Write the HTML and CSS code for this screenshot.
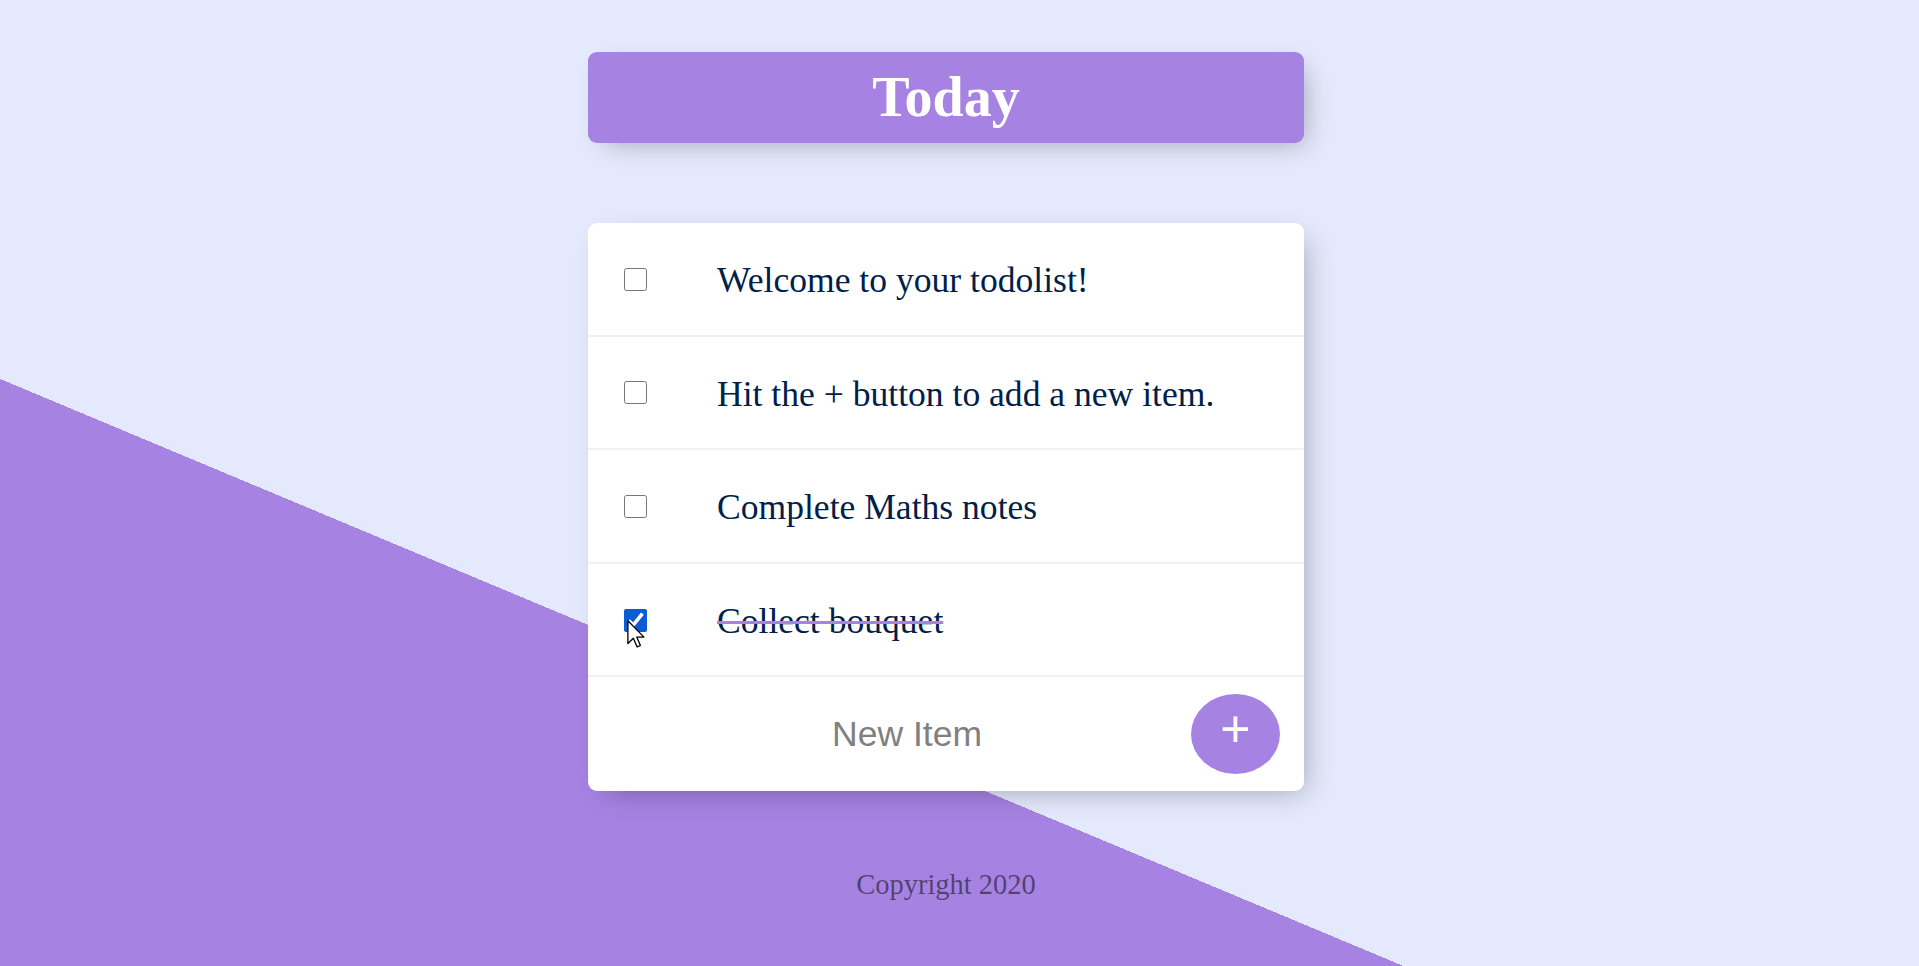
FILE: index.html
```html
<!DOCTYPE html>
<html lang="en">
<head>
<meta charset="utf-8">
<title>To-Do List</title>
<link rel="stylesheet" href="styles.css">
</head>
<body>
<div class="page">
  <div class="box heading">
    <h1>Today</h1>
  </div>

  <div class="box list">
    <div class="item">
      <span class="check"><input type="checkbox"></span>
      <p>Welcome to your todolist!</p>
    </div>
    <div class="item">
      <span class="check"><input type="checkbox"></span>
      <p>Hit the + button to add a new item.</p>
    </div>
    <div class="item">
      <span class="check"><input type="checkbox"></span>
      <p>Complete Maths notes</p>
    </div>
    <div class="item done">
      <span class="check">
        <input type="checkbox" checked>
        <svg class="cursor" width="18" height="28" viewBox="0 0 12 19" aria-hidden="true">
          <path d="M0.5 0.5 L0.5 16 L4.2 12.4 L6.8 18.3 L9 17.3 L6.5 11.6 L11.4 11.6 Z" fill="#fff" stroke="#000" stroke-width="0.9" stroke-linejoin="round"/>
        </svg>
      </span>
      <p>Collect bouquet</p>
    </div>
    <form class="item new">
      <input type="text" name="newItem" placeholder="New Item" autocomplete="off">
      <button type="button" name="list">+</button>
    </form>
  </div>

  <footer class="footer">Copyright 2020</footer>
</div>
</body>
</html>
```

FILE: styles.css
```css
html {
  height: 100%;
  background-color: #E4E9FD;
  background-image: linear-gradient(22.7deg, #A683E3 541.6px, #E4E9FD 541.6px);
  background-attachment: fixed;
}

body {
  margin: 0;
  padding: 0 27px 0 0;
  font-family: "Liberation Serif", "Times New Roman", serif;
  overflow: hidden;
}

.page {
  width: 716px;
  margin: 0 auto;
  padding-top: 52px;
}

.box {
  background: #fff;
  border-radius: 9px;
  box-shadow: 9px 9px 27px -9px rgba(0, 0, 0, 0.3);
}

.heading {
  background-color: #A683E3;
  text-align: center;
  padding: 18px;
}

.heading h1 {
  margin: 0;
  font-size: 56px;
  line-height: 55px;
  font-weight: bold;
  color: #fff;
}

.list {
  margin-top: 80px;
}

.item {
  display: flex;
  align-items: center;
  height: 113.6px;
  box-sizing: border-box;
  padding-top: 1px;
  border-bottom: 2px solid #F1F1F1;
  margin: 0;
}

.item:last-child {
  border-bottom: 0;
  padding-top: 0;
}

.check {
  position: relative;
  display: flex;
  flex: none;
  margin: 0 35px 0 36px;
}

.check input[type="checkbox"] {
  width: 23px;
  height: 23px;
  margin: 0;
  accent-color: #0b5cd5;
}

.cursor {
  position: absolute;
  left: 3px;
  top: 11px;
}

.item p {
  margin: 0;
  padding: 2px 35px 0;
  font-size: 35.6px;
  font-weight: normal;
  color: #00204a;
}

.done p {
  text-decoration: line-through;
  text-decoration-color: #A683E3;
  text-decoration-thickness: 3px;
}

.new {
  padding-left: 39px;
}

.new input[type="text"] {
  width: 560px;
  height: 107px;
  padding: 0;
  border: none;
  outline: none;
  background: transparent;
  text-align: center;
  font-family: "Liberation Sans", Arial, sans-serif;
  font-size: 35.5px;
  color: #333;
}

.new input[type="text"]::placeholder {
  color: grey;
  opacity: 1;
}

.new button {
  flex: none;
  width: 89px;
  height: 80px;
  margin-left: 4px;
  padding: 0 0 11px;
  border: 0;
  border-radius: 50%;
  background-color: #A683E3;
  color: #fff;
  font-family: "Liberation Sans", Arial, sans-serif;
  font-size: 52px;
  line-height: 1;
  display: flex;
  align-items: center;
  justify-content: center;
}

.footer {
  margin-top: 78px;
  text-align: center;
  font-size: 28.5px;
  color: rgba(0, 0, 0, 0.5);
}
```
